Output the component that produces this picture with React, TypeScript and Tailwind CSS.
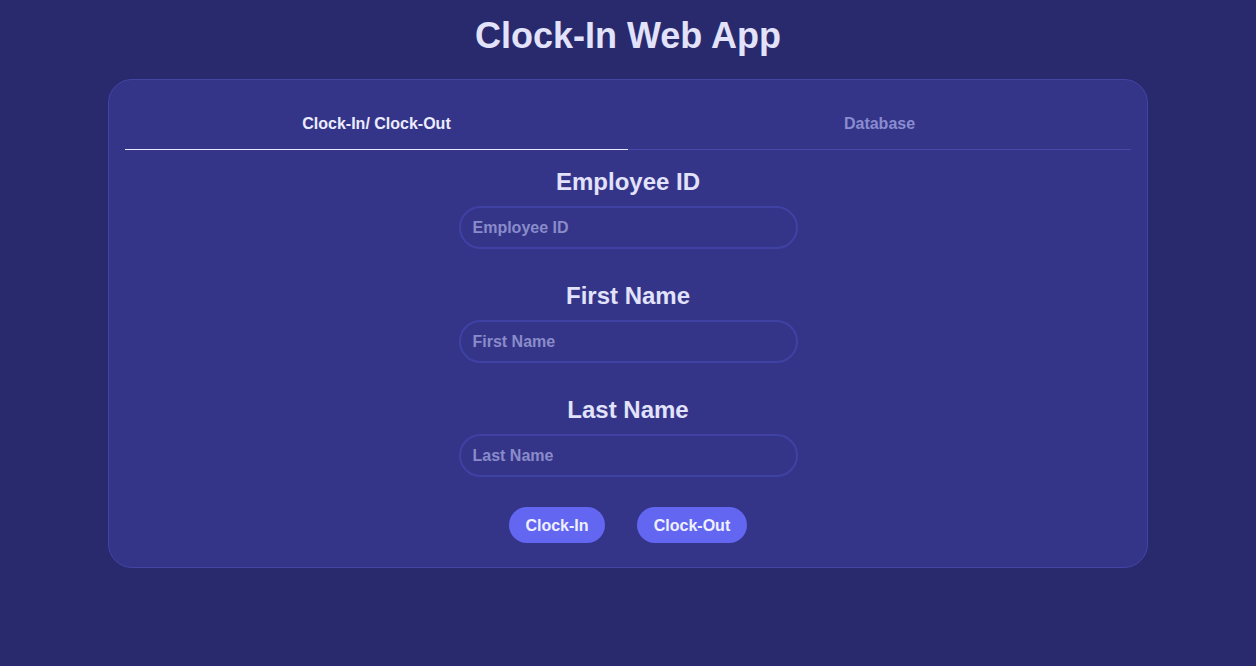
import { useState } from "react";

const fields = ["Employee ID", "First Name", "Last Name"];

export default function App() {
  const [tab, setTab] = useState(0);

  return (
    <div className="min-h-[666px] bg-[#292a6d] font-['Liberation_Sans',Arial,sans-serif] pt-[14px]">
      <h1 className="text-center text-[36px] font-bold leading-[44px] text-[#e2e2fb]">
        Clock-In Web App
      </h1>

      <div className="mx-auto mt-[21px] w-[1040px] rounded-[24px] border border-[#4245a3] bg-[#343589] px-4 pt-4 pb-6">
        <div className="flex border-b border-[#4649a8]">
          {["Clock-In/ Clock-Out", "Database"].map((t, i) => (
            <button
              key={t}
              onClick={() => setTab(i)}
              className={
                "-mb-px flex h-[54px] flex-1 items-center justify-center pt-[3px] text-[16px] font-bold " +
                (tab === i
                  ? "border-b border-[#e6e6ff] text-[#ececff]"
                  : "border-b border-transparent text-[#8a8cd0]")
              }
            >
              {t}
            </button>
          ))}
        </div>

        <div className="flex flex-col items-center pt-[18px]">
          {fields.map((f, i) => (
            <div key={f} className={"flex flex-col items-center " + (i > 0 ? "mt-[33px]" : "")}>
              <label className="text-[24px] font-bold leading-[28px] text-[#e2e2fb]">{f}</label>
              <input
                placeholder={f}
                className="mt-[10px] h-[43px] w-[339px] rounded-full border-2 border-[#3f42a3] bg-transparent px-3 text-[16px] font-bold text-[#e2e2fb] outline-none placeholder:text-[#8a8cc9]"
              />
            </div>
          ))}

          <div className="mt-[30px] flex gap-8">
            <button className="h-9 w-24 rounded-full bg-[#6366f1] pt-px text-[16px] font-bold text-[#eef0ff]">
              Clock-In
            </button>
            <button className="h-9 w-[110px] rounded-full bg-[#6366f1] pt-px text-[16px] font-bold text-[#eef0ff]">
              Clock-Out
            </button>
          </div>
        </div>
      </div>
    </div>
  );
}
